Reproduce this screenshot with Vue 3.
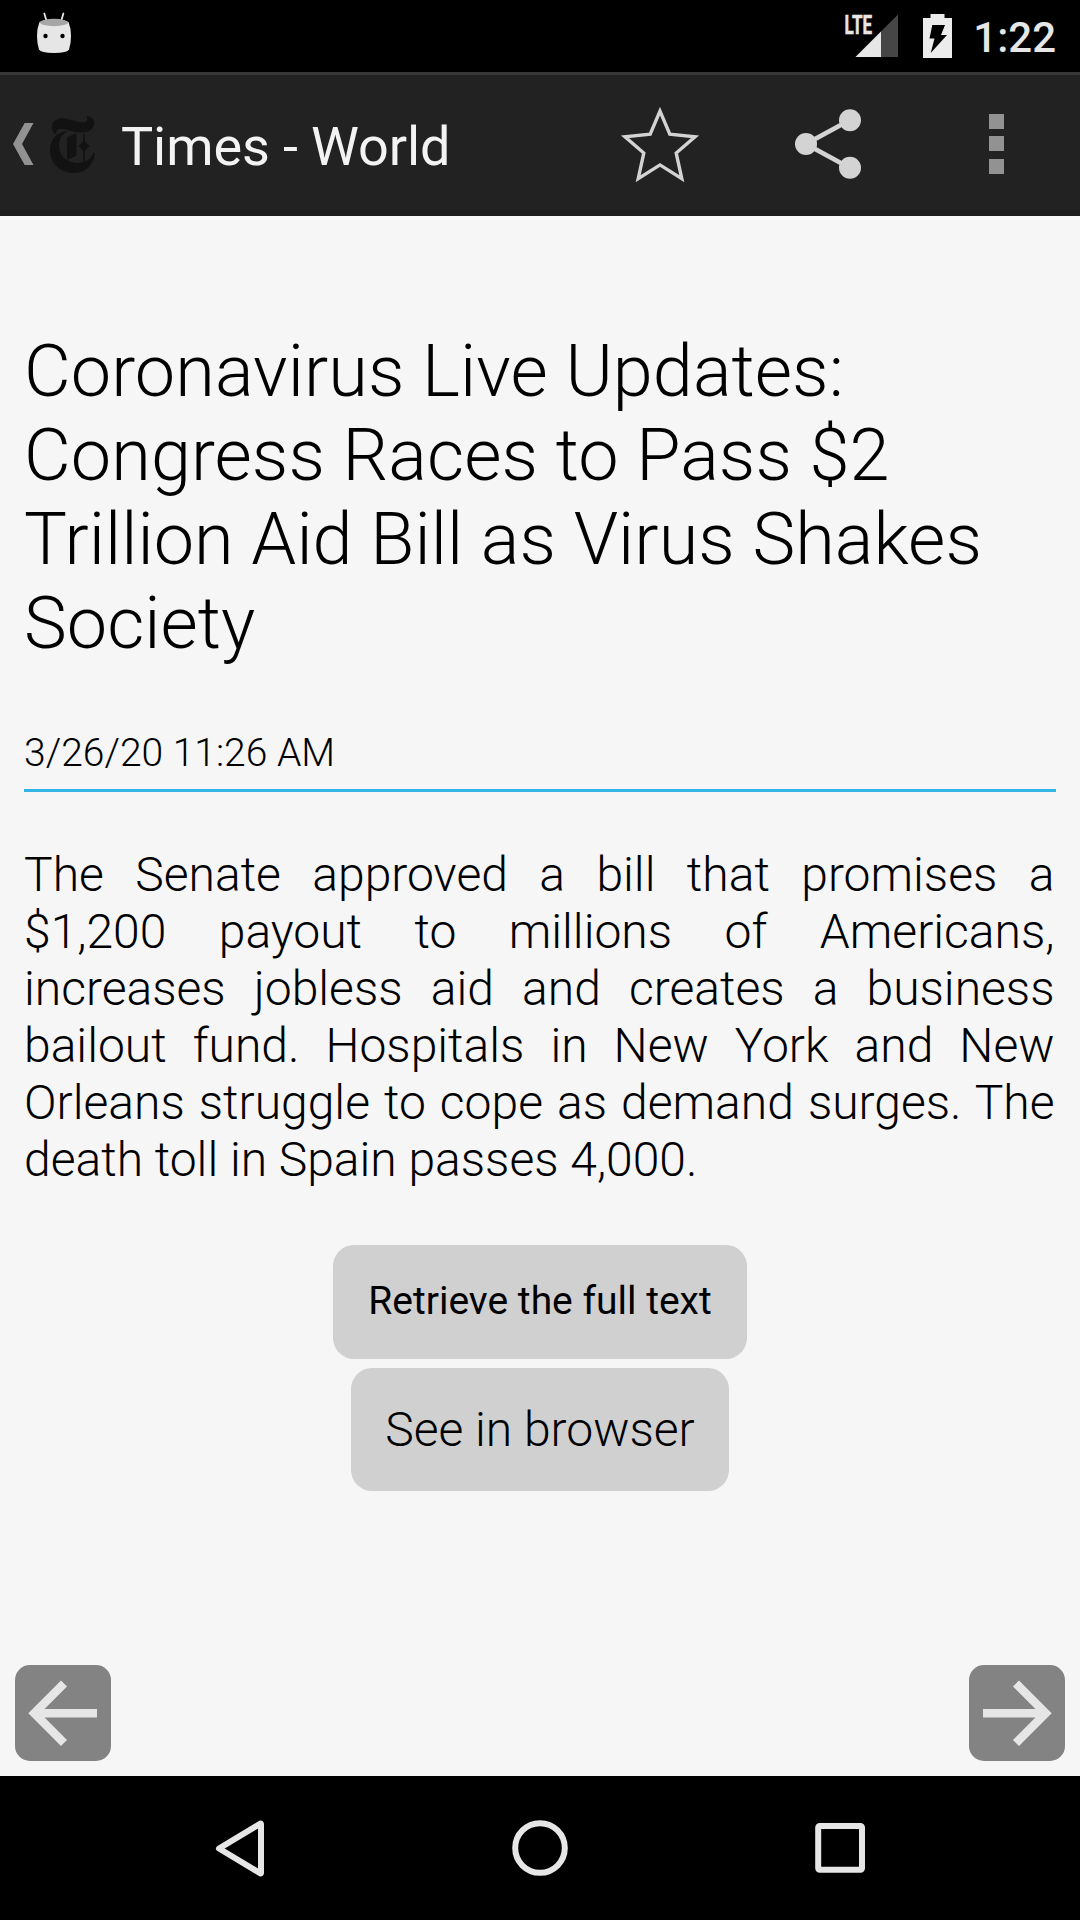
<script setup>
const headline = 'Coronavirus Live Updates: Congress Races to Pass $2 Trillion Aid Bill as Virus Shakes Society'
const summary =
  'The Senate approved a bill that promises a $1,200 payout to millions of Americans, increases jobless aid and creates a business bailout fund. Hospitals in New York and New Orleans struggle to cope as demand surges. The death toll in Spain passes 4,000.'
</script>

<template>
  <div class="screen">
    <div class="status">
      <svg class="droid" width="36" height="44" viewBox="36 11 36 44">
        <path d="M44.3 13.5 46.6 21M63.4 13.5 61.2 21" stroke="#e6e6e6" stroke-width="1.8" stroke-linecap="round" />
        <path d="M39.5 22Q54 16 68.5 22Q71 28 71 36Q71 44 69 49.500Q67.500 52.800 54 53Q40.500 52.800 39 49.500Q37 44 37 36Q37 28 39.500 22Z" fill="#e6e6e6" />
        <ellipse cx="54" cy="22.500" rx="14" ry="3.700" fill="#a6a6a6" />
        <circle cx="45.500" cy="36" r="2.200" />
        <circle cx="62.500" cy="36" r="2.200" />
      </svg>
      <div class="indicators">
        <svg width="58" height="60" viewBox="843 0 58 60">
          <text class="lte" x="844.600" y="33.800" textLength="27.500" lengthAdjust="spacingAndGlyphs">LTE</text>
          <path d="M855.500 57H898V14.500Z" fill="#464646" />
          <path d="M855.500 57H881V31.500Z" fill="#e6e6e6" />
        </svg>
        <svg class="battery" width="29" height="44" viewBox="923 14 29 44">
          <path d="M930.500 14H944.500V18H952V58H923V18H930.500Z" fill="#ececec" />
          <path d="M932.300 25H945L941 35H947L930.700 53L934.500 38.500H929.500Z" fill="#000" />
        </svg>
        <span class="clock">1:22</span>
      </div>
    </div>

    <header class="bar">
      <svg class="up" width="22" height="44" viewBox="12 122 22 44">
        <path d="M24.700 123H33.500L22 144L33.500 165H24.700L13 144Z" fill="#929292" />
      </svg>
      <svg class="logo" width="48" height="60" viewBox="48 113 48 60">
        <path d="M86 115C91 114.500 95 118.500 94 123.500C93 129.500 87 132 80 131.500C72 131 63 126.500 58.500 128C56 129 56 131.500 57 133.500C53 132 51 128.500 52 124.500C53 119 58 117 63.500 117.200C70 117.500 77 121.300 83 121.300C87 121.300 89 118 86 115Z" />
        <path d="M69 130C62 132 59 138 59 145C59 154 66 161 76 162C85 162.500 91 158 93.500 152L95 152.500C94 163 86 172 74 172C60 172 50 162 50 149C50 138 57 130.500 69 130Z" />
        <path d="M67 136.500 76.500 132V154.500L67 159ZM83.200 133H84.800V160H83.200ZM84 139.500 89.500 145 84 150.500 78.500 145Z" />
      </svg>
      <h1>Times - World</h1>
      <div class="actions">
        <svg width="84" height="84" viewBox="618 102 84 84">
          <path class="star" d="M660 111.200 669.800 134.200 695 136.700 676.200 153 681.800 178.600 660 164.900 638.200 178.600 643.800 153 625 136.700 650.200 134.200Z" />
        </svg>
        <svg width="84" height="84" viewBox="786 102 84 84">
          <path d="M850 120 806 144 850 168" fill="none" stroke="#d3d3d3" stroke-width="4.800" />
          <g fill="#d3d3d3">
            <circle cx="850" cy="120.200" r="11" />
            <circle cx="806" cy="144" r="11" />
            <circle cx="850" cy="167.700" r="11" />
          </g>
        </svg>
        <svg width="84" height="84" viewBox="954 102 84 84">
          <path d="M989 114h15v15h-15zM989 136h15v15h-15zM989 159h15v15h-15z" fill="#929292" />
        </svg>
      </div>
    </header>

    <main>
      <h2>{{ headline }}</h2>
      <div class="date">3/26/20 11:26 AM</div>
      <p>{{ summary }}</p>
      <div class="buttons">
        <button class="retrieve">Retrieve the full text</button>
        <button class="browse">See in browser</button>
      </div>
      <div class="pager">
        <button>
          <svg width="96" height="96" viewBox="0 0 96 96"><path d="M82 48.200H20M49 18.500 19.300 48.200 49 77.900" /></svg>
        </button>
        <button>
          <svg width="96" height="96" viewBox="0 0 96 96"><path d="M14 48.200H76M47 18.500 76.700 48.200 47 77.900" /></svg>
        </button>
      </div>
    </main>

    <nav>
      <svg width="60" height="60" viewBox="210 1818 60 60">
        <path d="M219 1848.500 260.500 1823.500Q261 1823.300 261 1824V1873Q261 1873.700 260.500 1873.400Z" />
      </svg>
      <svg width="60" height="60" viewBox="510 1818 60 60"><circle cx="540" cy="1848" r="24.800" /></svg>
      <svg width="60" height="60" viewBox="810 1818 60 60">
        <rect x="818.200" y="1826" width="43.800" height="43.800" rx="1.500" />
      </svg>
    </nav>
  </div>
</template>

<style>
body {
  margin: 0;
}
</style>

<style scoped>
.screen {
  width: 1080px;
  height: 1920px;
  display: flex;
  flex-direction: column;
  overflow: hidden;
  background: #f6f6f6;
  font-family: Roboto, sans-serif;
  color: #000;
}
svg {
  display: block;
  flex: none;
}
.status {
  height: 72px;
  flex: none;
  box-sizing: border-box;
  background: #000;
  display: flex;
  justify-content: space-between;
  padding: 0 24px 0 36px;
}
.droid {
  margin-top: 11px;
}
.indicators {
  display: flex;
  align-items: flex-start;
}
.indicators .battery {
  margin: 14px 21px 0 22px;
}
.lte {
  font: 700 26px Roboto, sans-serif;
  fill: #e6e6e6;
  stroke: #e6e6e6;
  stroke-width: 0.5;
}
.clock {
  font-size: 42px;
  font-weight: 500;
  line-height: 50px;
  margin-top: 13px;
  color: #e6e6e6;
}
.bar {
  height: 144px;
  flex: none;
  box-sizing: border-box;
  display: flex;
  align-items: center;
  background: #222;
  border-top: 3px solid #373737;
  border-bottom: 6px solid #1b1b1b;
  padding: 3px 0 0 12px;
}
.logo {
  margin-left: 14px;
  fill: #121212;
}
h1 {
  margin: 5px 0 0 25px;
  font-size: 54px;
  font-weight: 400;
  line-height: 64px;
  letter-spacing: -0.1px;
  color: #f3f3f3;
}
.actions {
  display: flex;
  gap: 84px;
  margin: 0 42px 0 auto;
}
.star {
  fill: none;
  stroke: #d3d3d3;
  stroke-width: 3.4;
}
main {
  flex: 1;
  display: flex;
  flex-direction: column;
  padding: 114px 24px 0;
}
h2 {
  margin: 0;
  font-size: 72px;
  font-weight: 300;
  line-height: 84px;
  letter-spacing: 0.06px;
}
.date {
  margin-top: 63px;
  height: 60px;
  line-height: 48px;
  font-size: 39px;
  font-weight: 300;
  border-bottom: 3px solid #33b5e5;
}
main p {
  margin: 54px 1.5px 0 0;
  font-size: 48px;
  font-weight: 300;
  line-height: 57px;
  text-align: justify;
}
.buttons {
  display: flex;
  flex-direction: column;
  align-items: center;
  gap: 9px;
  margin-top: 57px;
}
button {
  border: 0;
  padding: 0;
  font-family: inherit;
  color: #000;
}
.buttons button {
  background: #d0d0d0;
  border-radius: 21px;
}
.buttons .retrieve {
  box-sizing: border-box;
  width: 414px;
  height: 114px;
  padding-bottom: 3px;
  font-size: 39px;
}
.browse {
  width: 378px;
  height: 123px;
  font-size: 48px;
  font-weight: 300;
}
.pager {
  display: flex;
  justify-content: space-between;
  margin: auto -9px 15px;
}
.pager button {
  background: #838383;
  border-radius: 15px;
}
.pager path {
  fill: none;
  stroke: #e6e6e6;
  stroke-width: 8.5;
}
nav {
  height: 144px;
  flex: none;
  box-sizing: border-box;
  background: #000;
  display: flex;
  justify-content: space-between;
  align-items: center;
  padding: 0 210px;
  fill: none;
  stroke: #e6e6e6;
  stroke-width: 6;
  stroke-linejoin: round;
}
</style>
